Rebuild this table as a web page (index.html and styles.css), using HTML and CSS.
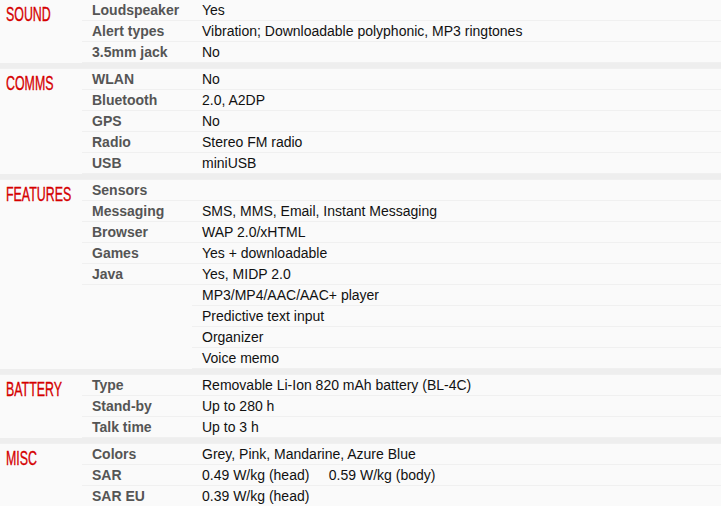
FILE: index.html
```html
<!DOCTYPE html>
<html>
<head>
<meta charset="utf-8">
<link rel="stylesheet" href="styles.css">
</head>
<body>
<div class="specs">
  <section class="sec">
    <h2 class="cat"><span>Sound</span></h2>
    <div class="rows">
      <div class="ttl">Loudspeaker</div><div class="nfo">Yes</div>
      <div class="ttl">Alert types</div><div class="nfo">Vibration; Downloadable polyphonic, MP3 ringtones</div>
      <div class="ttl">3.5mm jack</div><div class="nfo">No</div>
    </div>
  </section>
  <section class="sec">
    <h2 class="cat"><span>Comms</span></h2>
    <div class="rows">
      <div class="ttl">WLAN</div><div class="nfo">No</div>
      <div class="ttl">Bluetooth</div><div class="nfo">2.0, A2DP</div>
      <div class="ttl">GPS</div><div class="nfo">No</div>
      <div class="ttl">Radio</div><div class="nfo">Stereo FM radio</div>
      <div class="ttl">USB</div><div class="nfo">miniUSB</div>
    </div>
  </section>
  <section class="sec">
    <h2 class="cat"><span>Features</span></h2>
    <div class="rows">
      <div class="ttl">Sensors</div><div class="nfo"></div>
      <div class="ttl">Messaging</div><div class="nfo">SMS, MMS, Email, Instant Messaging</div>
      <div class="ttl">Browser</div><div class="nfo">WAP 2.0/xHTML</div>
      <div class="ttl">Games</div><div class="nfo">Yes + downloadable</div>
      <div class="ttl">Java</div><div class="nfo">Yes, MIDP 2.0</div>
      <div class="ttl empty"></div><div class="nfo">MP3/MP4/AAC/AAC+ player</div>
      <div class="ttl empty"></div><div class="nfo">Predictive text input</div>
      <div class="ttl empty"></div><div class="nfo">Organizer</div>
      <div class="ttl empty"></div><div class="nfo">Voice memo</div>
    </div>
  </section>
  <section class="sec">
    <h2 class="cat"><span>Battery</span></h2>
    <div class="rows">
      <div class="ttl">Type</div><div class="nfo">Removable Li-Ion 820 mAh battery (BL-4C)</div>
      <div class="ttl">Stand-by</div><div class="nfo">Up to 280 h</div>
      <div class="ttl">Talk time</div><div class="nfo">Up to 3 h</div>
    </div>
  </section>
  <section class="sec">
    <h2 class="cat"><span>Misc</span></h2>
    <div class="rows">
      <div class="ttl">Colors</div><div class="nfo">Grey, Pink, Mandarine, Azure Blue</div>
      <div class="ttl">SAR</div><div class="nfo">0.49 W/kg (head) &nbsp;&nbsp;&nbsp; 0.59 W/kg (body)</div>
      <div class="ttl">SAR EU</div><div class="nfo">0.39 W/kg (head)</div>
    </div>
  </section>
</div>
</body>
</html>
```
FILE: styles.css
```css
html, body {
  margin: 0;
  padding: 0;
  background: #fafafa;
}
body {
  font-family: "Liberation Sans", Arial, sans-serif;
  font-size: 14px;
  overflow: hidden;
}
.specs {
  margin-top: -1px;
}
.sec {
  display: flex;
  border-top: 1px solid #f0f0f0;
  border-bottom: 5px solid #eeeeee;
}
.cat {
  flex: 0 0 82px;
  width: 82px;
  min-width: 0;
  box-sizing: border-box;
  margin: 0;
  padding: 4px 0 0 6px;
  font-family: "Liberation Sans", Arial, sans-serif;
  font-weight: normal;
  font-size: 20px;
  line-height: 20px;
  color: #d50000;
  text-transform: uppercase;
  -webkit-text-stroke: 0.35px #d50000;
}
.cat span {
  display: inline-block;
  transform: scaleX(0.62);
  transform-origin: left top;
  white-space: nowrap;
}
.rows {
  flex: 1;
  min-width: 0;
  display: grid;
  grid-template-columns: 110px 1fr;
}
.ttl, .nfo {
  line-height: 20px;
  height: 20px;
  border-bottom: 1px solid #f0f0f0;
  padding-left: 10px;
  white-space: nowrap;
}
.ttl {
  font-weight: bold;
  color: #555555;
}
.ttl.empty {
  border-bottom-color: transparent;
}
.nfo {
  color: #111111;
}
```
